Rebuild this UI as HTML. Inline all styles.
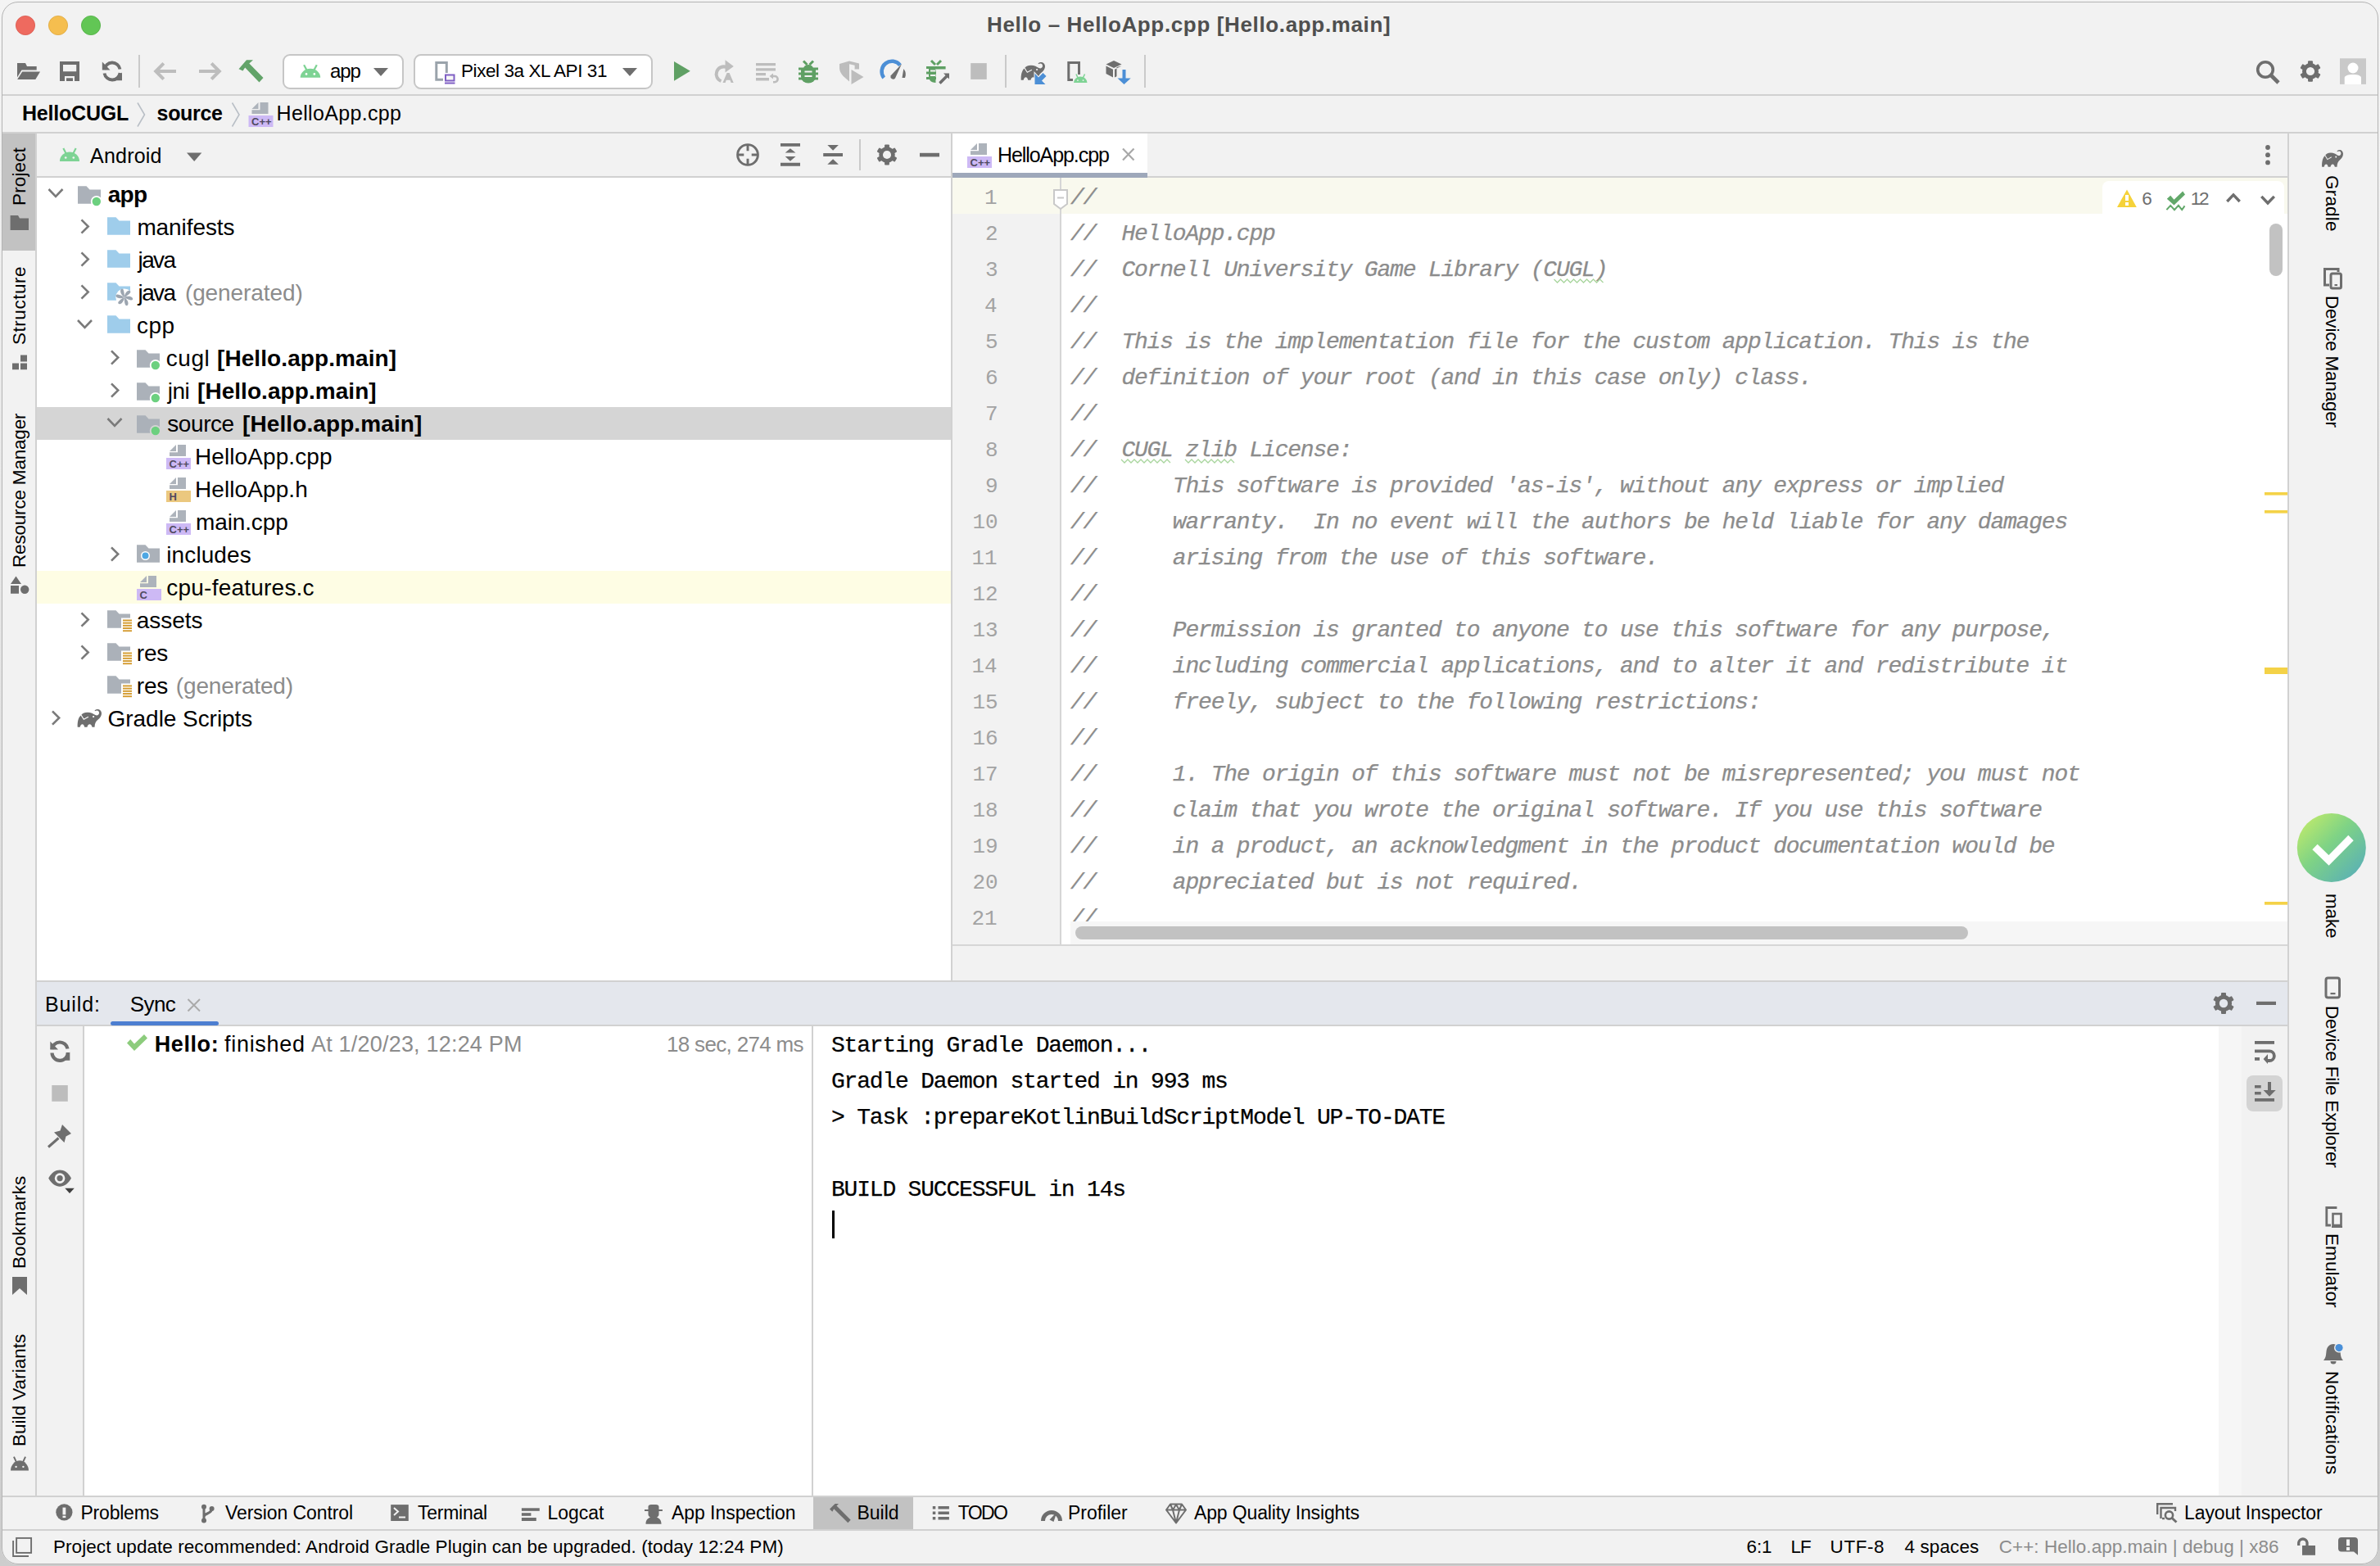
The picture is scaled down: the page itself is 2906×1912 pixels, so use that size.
<!DOCTYPE html>
<html><head><meta charset="utf-8"><title>Android Studio</title>
<style>
html,body{margin:0;padding:0;width:2906px;height:1912px;overflow:hidden;background:linear-gradient(#f4f4f4,#cdcdcd);}
#win{position:absolute;left:2px;top:2px;width:2902px;height:1908px;border-radius:20px;overflow:hidden;background:#f2f2f2;}
#in{position:absolute;left:-2px;top:-2px;width:2906px;height:1912px;}
#in div{position:absolute;}
#in div.t{height:0;line-height:0;white-space:pre;}
#code{overflow:hidden;}
#frame{position:absolute;left:2px;top:2px;width:2900px;height:1906px;border-radius:20px;border:1px solid #b4b4b4;pointer-events:none;}
</style></head><body>
<div id="win"><div id="in">
<div style="left:0px;top:115px;width:2906px;height:2px;background:#d1d1d1;"></div><div style="left:0px;top:161px;width:2906px;height:2px;background:#d1d1d1;"></div><div style="left:43px;top:163px;width:2px;height:1663px;background:#d1d1d1;"></div><div style="left:3px;top:163px;width:40px;height:143px;background:#c2c2c2;"></div><div style="left:45px;top:215px;width:1116px;height:2px;background:#d1d1d1;"></div><div style="left:45px;top:217px;width:1116px;height:980px;background:#ffffff;"></div><div style="left:45px;top:497px;width:1116px;height:40px;background:#d5d5d5;"></div><div style="left:45px;top:697px;width:1116px;height:40px;background:#fefde4;"></div><div style="left:1161px;top:163px;width:2px;height:1034px;background:#d1d1d1;"></div><div style="left:1163px;top:215px;width:1630px;height:2px;background:#d1d1d1;"></div><div style="left:1163px;top:163px;width:238px;height:48px;background:#ffffff;"></div><div style="left:1163px;top:211px;width:238px;height:6px;background:#9ea8ba;"></div><div style="left:1163px;top:217px;width:131px;height:936px;background:#f2f2f2;"></div><div style="left:1296px;top:217px;width:1497px;height:936px;background:#ffffff;"></div><div style="left:1163px;top:217px;width:1630px;height:44px;background:#f9f9ee;"></div><div style="left:1294px;top:217px;width:2px;height:936px;background:#d6d6d6;"></div><div style="left:1163px;top:1153px;width:1630px;height:2px;background:#d6d6d6;"></div><div style="left:2793px;top:163px;width:2px;height:1663px;background:#d1d1d1;"></div><div style="left:45px;top:1197px;width:2748px;height:2px;background:#d1d1d1;"></div><div style="left:45px;top:1199px;width:2748px;height:52px;background:#e4e7ed;"></div><div style="left:45px;top:1251px;width:2748px;height:2px;background:#d1d1d1;"></div><div style="left:101px;top:1253px;width:2px;height:573px;background:#d1d1d1;"></div><div style="left:103px;top:1253px;width:888px;height:573px;background:#ffffff;"></div><div style="left:991px;top:1253px;width:2px;height:573px;background:#d1d1d1;"></div><div style="left:993px;top:1253px;width:1716px;height:573px;background:#ffffff;"></div><div style="left:2709px;top:1253px;width:28px;height:573px;background:#f6f6f6;"></div><div style="left:2743px;top:1313px;width:44px;height:44px;background:#d4d4d4;border-radius:8px;"></div><div style="left:0px;top:1826px;width:2906px;height:2px;background:#d1d1d1;"></div><div style="left:993px;top:1828px;width:122px;height:39px;background:#c2c2c2;"></div><div style="left:0px;top:1867px;width:2906px;height:2px;background:#d1d1d1;"></div><div style="left:345px;top:66px;width:148px;height:43px;background:#ffffff;border:2px solid #c6c6c6;border-radius:9px;box-sizing:border-box;"></div><div style="left:505px;top:66px;width:292px;height:43px;background:#ffffff;border:2px solid #c6c6c6;border-radius:9px;box-sizing:border-box;"></div><div style="left:2567px;top:221px;width:222px;height:40px;background:#ffffff;border-radius:8px 8px 0 0;"></div><div style="left:1016px;top:1478px;width:3px;height:34px;background:#000;"></div>
<div class=t style="left:1205.00px;top:29.99px;font-family:'Liberation Sans';font-size:26px;font-weight:700;color:#4f4f4f;letter-spacing:0.644px;">Hello – HelloApp.cpp [Hello.app.main]</div><div class=t style="left:403.00px;top:86.68px;font-family:'Liberation Sans';font-size:24px;font-weight:400;color:#000;letter-spacing:-1.098px;">app</div><div class=t style="left:563.00px;top:87.20px;font-family:'Liberation Sans';font-size:22.5px;font-weight:400;color:#000;letter-spacing:-0.418px;">Pixel 3a XL API 31</div><div class=t style="left:27.00px;top:138.34px;font-family:'Liberation Sans';font-size:25px;font-weight:700;color:#000;letter-spacing:-0.209px;">HelloCUGL</div><div class=t style="left:191.60px;top:138.34px;font-family:'Liberation Sans';font-size:25px;font-weight:700;color:#000;letter-spacing:-0.336px;">source</div><div class=t style="left:337.50px;top:138.34px;font-family:'Liberation Sans';font-size:25px;font-weight:400;color:#000;letter-spacing:0.336px;">HelloApp.cpp</div><div class=t style="left:110.00px;top:190.34px;font-family:'Liberation Sans';font-size:25px;font-weight:400;color:#000;letter-spacing:0.222px;">Android</div><div class=t style="left:131.70px;top:238.30px;font-family:'Liberation Sans';font-size:28px;font-weight:700;color:#000;letter-spacing:-0.688px;">app</div><div class=t style="left:167.40px;top:278.30px;font-family:'Liberation Sans';font-size:28px;font-weight:400;color:#000;letter-spacing:-0.090px;">manifests</div><div class=t style="left:168.60px;top:318.30px;font-family:'Liberation Sans';font-size:28px;font-weight:400;color:#000;letter-spacing:-1.631px;">java</div><div class=t style="left:168.60px;top:358.30px;font-family:'Liberation Sans';font-size:28px;font-weight:400;color:#000;letter-spacing:-1.631px;">java</div><div class=t style="left:225.90px;top:358.30px;font-family:'Liberation Sans';font-size:28px;font-weight:400;color:#8c8c8c;letter-spacing:-0.083px;">(generated)</div><div class=t style="left:167.00px;top:398.30px;font-family:'Liberation Sans';font-size:28px;font-weight:400;color:#000;letter-spacing:0.464px;">cpp</div><div class=t style="left:202.70px;top:438.30px;font-family:'Liberation Sans';font-size:28px;font-weight:400;color:#000;letter-spacing:0.585px;">cugl</div><div class=t style="left:265.00px;top:438.30px;font-family:'Liberation Sans';font-size:28px;font-weight:700;color:#000;letter-spacing:0.082px;">[Hello.app.main]</div><div class=t style="left:204.70px;top:478.30px;font-family:'Liberation Sans';font-size:28px;font-weight:400;color:#000;letter-spacing:-0.446px;">jni</div><div class=t style="left:241.00px;top:478.30px;font-family:'Liberation Sans';font-size:28px;font-weight:700;color:#000;letter-spacing:0.055px;">[Hello.app.main]</div><div class=t style="left:204.30px;top:518.30px;font-family:'Liberation Sans';font-size:28px;font-weight:400;color:#000;letter-spacing:-0.434px;">source</div><div class=t style="left:296.00px;top:518.30px;font-family:'Liberation Sans';font-size:28px;font-weight:700;color:#000;letter-spacing:0.102px;">[Hello.app.main]</div><div class=t style="left:238.00px;top:558.30px;font-family:'Liberation Sans';font-size:28px;font-weight:400;color:#000;letter-spacing:0.084px;">HelloApp.cpp</div><div class=t style="left:238.00px;top:598.30px;font-family:'Liberation Sans';font-size:28px;font-weight:400;color:#000;letter-spacing:0.088px;">HelloApp.h</div><div class=t style="left:239.00px;top:638.30px;font-family:'Liberation Sans';font-size:28px;font-weight:400;color:#000;letter-spacing:-0.120px;">main.cpp</div><div class=t style="left:203.30px;top:678.30px;font-family:'Liberation Sans';font-size:28px;font-weight:400;color:#000;letter-spacing:0.096px;">includes</div><div class=t style="left:203.30px;top:718.30px;font-family:'Liberation Sans';font-size:28px;font-weight:400;color:#000;letter-spacing:0.222px;">cpu-features.c</div><div class=t style="left:166.80px;top:758.30px;font-family:'Liberation Sans';font-size:28px;font-weight:400;color:#000;letter-spacing:-0.045px;">assets</div><div class=t style="left:166.80px;top:798.30px;font-family:'Liberation Sans';font-size:28px;font-weight:400;color:#000;letter-spacing:-0.198px;">res</div><div class=t style="left:166.80px;top:838.30px;font-family:'Liberation Sans';font-size:28px;font-weight:400;color:#000;letter-spacing:-0.198px;">res</div><div class=t style="left:214.80px;top:838.30px;font-family:'Liberation Sans';font-size:28px;font-weight:400;color:#8c8c8c;letter-spacing:-0.143px;">(generated)</div><div class=t style="left:131.60px;top:878.30px;font-family:'Liberation Sans';font-size:28px;font-weight:400;color:#000;letter-spacing:-0.053px;">Gradle Scripts</div><div class=t style="left:1218.00px;top:189.34px;font-family:'Liberation Sans';font-size:25px;font-weight:400;color:#000;letter-spacing:-1.073px;">HelloApp.cpp</div><div class=t style="left:1307.00px;top:242.34px;font-family:'Liberation Mono';font-size:28px;font-weight:400;color:#8c8c8c;font-style:italic;letter-spacing:-1.200px;-webkit-text-stroke:0.25px #8c8c8c;">//</div><div class=t style="left:1202.00px;top:241.87px;font-family:'Liberation Mono';font-size:26px;font-weight:400;color:#a3a3a3;">1</div><div class=t style="left:1307.00px;top:286.34px;font-family:'Liberation Mono';font-size:28px;font-weight:400;color:#8c8c8c;font-style:italic;letter-spacing:-1.200px;-webkit-text-stroke:0.25px #8c8c8c;">//  HelloApp.cpp</div><div class=t style="left:1203.00px;top:285.87px;font-family:'Liberation Mono';font-size:26px;font-weight:400;color:#a3a3a3;">2</div><div class=t style="left:1307.00px;top:330.34px;font-family:'Liberation Mono';font-size:28px;font-weight:400;color:#8c8c8c;font-style:italic;letter-spacing:-1.200px;-webkit-text-stroke:0.25px #8c8c8c;">//  Cornell University Game Library (CUGL)</div><div class=t style="left:1203.00px;top:329.87px;font-family:'Liberation Mono';font-size:26px;font-weight:400;color:#a3a3a3;">3</div><div class=t style="left:1307.00px;top:374.34px;font-family:'Liberation Mono';font-size:28px;font-weight:400;color:#8c8c8c;font-style:italic;letter-spacing:-1.200px;-webkit-text-stroke:0.25px #8c8c8c;">//</div><div class=t style="left:1202.00px;top:373.87px;font-family:'Liberation Mono';font-size:26px;font-weight:400;color:#a3a3a3;">4</div><div class=t style="left:1307.00px;top:418.34px;font-family:'Liberation Mono';font-size:28px;font-weight:400;color:#8c8c8c;font-style:italic;letter-spacing:-1.200px;-webkit-text-stroke:0.25px #8c8c8c;">//  This is the implementation file for the custom application. This is the</div><div class=t style="left:1203.00px;top:417.87px;font-family:'Liberation Mono';font-size:26px;font-weight:400;color:#a3a3a3;">5</div><div class=t style="left:1307.00px;top:462.34px;font-family:'Liberation Mono';font-size:28px;font-weight:400;color:#8c8c8c;font-style:italic;letter-spacing:-1.200px;-webkit-text-stroke:0.25px #8c8c8c;">//  definition of your root (and in this case only) class.</div><div class=t style="left:1203.00px;top:461.87px;font-family:'Liberation Mono';font-size:26px;font-weight:400;color:#a3a3a3;">6</div><div class=t style="left:1307.00px;top:506.34px;font-family:'Liberation Mono';font-size:28px;font-weight:400;color:#8c8c8c;font-style:italic;letter-spacing:-1.200px;-webkit-text-stroke:0.25px #8c8c8c;">//</div><div class=t style="left:1203.00px;top:505.87px;font-family:'Liberation Mono';font-size:26px;font-weight:400;color:#a3a3a3;">7</div><div class=t style="left:1307.00px;top:550.34px;font-family:'Liberation Mono';font-size:28px;font-weight:400;color:#8c8c8c;font-style:italic;letter-spacing:-1.200px;-webkit-text-stroke:0.25px #8c8c8c;">//  CUGL zlib License:</div><div class=t style="left:1203.00px;top:549.87px;font-family:'Liberation Mono';font-size:26px;font-weight:400;color:#a3a3a3;">8</div><div class=t style="left:1307.00px;top:594.34px;font-family:'Liberation Mono';font-size:28px;font-weight:400;color:#8c8c8c;font-style:italic;letter-spacing:-1.200px;-webkit-text-stroke:0.25px #8c8c8c;">//      This software is provided &#x27;as-is&#x27;, without any express or implied</div><div class=t style="left:1203.00px;top:593.87px;font-family:'Liberation Mono';font-size:26px;font-weight:400;color:#a3a3a3;">9</div><div class=t style="left:1307.00px;top:638.34px;font-family:'Liberation Mono';font-size:28px;font-weight:400;color:#8c8c8c;font-style:italic;letter-spacing:-1.200px;-webkit-text-stroke:0.25px #8c8c8c;">//      warranty.  In no event will the authors be held liable for any damages</div><div class=t style="left:1187.40px;top:637.87px;font-family:'Liberation Mono';font-size:26px;font-weight:400;color:#a3a3a3;">10</div><div class=t style="left:1307.00px;top:682.34px;font-family:'Liberation Mono';font-size:28px;font-weight:400;color:#8c8c8c;font-style:italic;letter-spacing:-1.200px;-webkit-text-stroke:0.25px #8c8c8c;">//      arising from the use of this software.</div><div class=t style="left:1186.40px;top:681.87px;font-family:'Liberation Mono';font-size:26px;font-weight:400;color:#a3a3a3;">11</div><div class=t style="left:1307.00px;top:726.34px;font-family:'Liberation Mono';font-size:28px;font-weight:400;color:#8c8c8c;font-style:italic;letter-spacing:-1.200px;-webkit-text-stroke:0.25px #8c8c8c;">//</div><div class=t style="left:1187.40px;top:725.87px;font-family:'Liberation Mono';font-size:26px;font-weight:400;color:#a3a3a3;">12</div><div class=t style="left:1307.00px;top:770.34px;font-family:'Liberation Mono';font-size:28px;font-weight:400;color:#8c8c8c;font-style:italic;letter-spacing:-1.200px;-webkit-text-stroke:0.25px #8c8c8c;">//      Permission is granted to anyone to use this software for any purpose,</div><div class=t style="left:1187.40px;top:769.87px;font-family:'Liberation Mono';font-size:26px;font-weight:400;color:#a3a3a3;">13</div><div class=t style="left:1307.00px;top:814.34px;font-family:'Liberation Mono';font-size:28px;font-weight:400;color:#8c8c8c;font-style:italic;letter-spacing:-1.200px;-webkit-text-stroke:0.25px #8c8c8c;">//      including commercial applications, and to alter it and redistribute it</div><div class=t style="left:1186.40px;top:813.87px;font-family:'Liberation Mono';font-size:26px;font-weight:400;color:#a3a3a3;">14</div><div class=t style="left:1307.00px;top:858.34px;font-family:'Liberation Mono';font-size:28px;font-weight:400;color:#8c8c8c;font-style:italic;letter-spacing:-1.200px;-webkit-text-stroke:0.25px #8c8c8c;">//      freely, subject to the following restrictions:</div><div class=t style="left:1187.40px;top:857.87px;font-family:'Liberation Mono';font-size:26px;font-weight:400;color:#a3a3a3;">15</div><div class=t style="left:1307.00px;top:902.34px;font-family:'Liberation Mono';font-size:28px;font-weight:400;color:#8c8c8c;font-style:italic;letter-spacing:-1.200px;-webkit-text-stroke:0.25px #8c8c8c;">//</div><div class=t style="left:1187.40px;top:901.87px;font-family:'Liberation Mono';font-size:26px;font-weight:400;color:#a3a3a3;">16</div><div class=t style="left:1307.00px;top:946.34px;font-family:'Liberation Mono';font-size:28px;font-weight:400;color:#8c8c8c;font-style:italic;letter-spacing:-1.200px;-webkit-text-stroke:0.25px #8c8c8c;">//      1. The origin of this software must not be misrepresented; you must not</div><div class=t style="left:1187.40px;top:945.87px;font-family:'Liberation Mono';font-size:26px;font-weight:400;color:#a3a3a3;">17</div><div class=t style="left:1307.00px;top:990.34px;font-family:'Liberation Mono';font-size:28px;font-weight:400;color:#8c8c8c;font-style:italic;letter-spacing:-1.200px;-webkit-text-stroke:0.25px #8c8c8c;">//      claim that you wrote the original software. If you use this software</div><div class=t style="left:1187.40px;top:989.87px;font-family:'Liberation Mono';font-size:26px;font-weight:400;color:#a3a3a3;">18</div><div class=t style="left:1307.00px;top:1034.34px;font-family:'Liberation Mono';font-size:28px;font-weight:400;color:#8c8c8c;font-style:italic;letter-spacing:-1.200px;-webkit-text-stroke:0.25px #8c8c8c;">//      in a product, an acknowledgment in the product documentation would be</div><div class=t style="left:1187.40px;top:1033.87px;font-family:'Liberation Mono';font-size:26px;font-weight:400;color:#a3a3a3;">19</div><div class=t style="left:1307.00px;top:1078.34px;font-family:'Liberation Mono';font-size:28px;font-weight:400;color:#8c8c8c;font-style:italic;letter-spacing:-1.200px;-webkit-text-stroke:0.25px #8c8c8c;">//      appreciated but is not required.</div><div class=t style="left:1187.40px;top:1077.87px;font-family:'Liberation Mono';font-size:26px;font-weight:400;color:#a3a3a3;">20</div><div class=t style="left:1307.00px;top:1122.34px;font-family:'Liberation Mono';font-size:28px;font-weight:400;color:#8c8c8c;font-style:italic;letter-spacing:-1.200px;-webkit-text-stroke:0.25px #8c8c8c;">//</div><div class=t style="left:1186.40px;top:1121.87px;font-family:'Liberation Mono';font-size:26px;font-weight:400;color:#a3a3a3;">21</div><div class=t style="left:2615.20px;top:243.20px;font-family:'Liberation Sans';font-size:22.5px;font-weight:400;color:#6e6e6e;">6</div><div class=t style="left:2674.80px;top:243.20px;font-family:'Liberation Sans';font-size:22.5px;font-weight:400;color:#6e6e6e;letter-spacing:-2.313px;">12</div><div class=t style="left:55.00px;top:1226.34px;font-family:'Liberation Sans';font-size:25px;font-weight:400;color:#000;letter-spacing:0.882px;">Build:</div><div class=t style="left:158.70px;top:1225.99px;font-family:'Liberation Sans';font-size:26px;font-weight:400;color:#000;letter-spacing:-0.567px;">Sync</div><div class=t style="left:188.70px;top:1274.64px;font-family:'Liberation Sans';font-size:27px;font-weight:700;color:#000;letter-spacing:0.598px;">Hello:</div><div class=t style="left:274.00px;top:1274.64px;font-family:'Liberation Sans';font-size:27px;font-weight:400;color:#000;letter-spacing:0.708px;">finished</div><div class=t style="left:380.00px;top:1274.64px;font-family:'Liberation Sans';font-size:27px;font-weight:400;color:#8c8c8c;letter-spacing:0.201px;">At 1/20/23, 12:24 PM</div><div class=t style="left:814.00px;top:1274.99px;font-family:'Liberation Sans';font-size:26px;font-weight:400;color:#8c8c8c;letter-spacing:-0.678px;">18 sec, 274 ms</div><div class=t style="left:1015.00px;top:1276.54px;font-family:'Liberation Mono';font-size:28px;font-weight:400;color:#000;letter-spacing:-1.200px;-webkit-text-stroke:0.25px #000;">Starting Gradle Daemon...</div><div class=t style="left:1015.00px;top:1320.54px;font-family:'Liberation Mono';font-size:28px;font-weight:400;color:#000;letter-spacing:-1.200px;-webkit-text-stroke:0.25px #000;">Gradle Daemon started in 993 ms</div><div class=t style="left:1015.00px;top:1364.54px;font-family:'Liberation Mono';font-size:28px;font-weight:400;color:#000;letter-spacing:-1.200px;-webkit-text-stroke:0.25px #000;">&gt; Task :prepareKotlinBuildScriptModel UP-TO-DATE</div><div class=t style="left:1015.00px;top:1452.54px;font-family:'Liberation Mono';font-size:28px;font-weight:400;color:#000;letter-spacing:-1.200px;-webkit-text-stroke:0.25px #000;">BUILD SUCCESSFUL in 14s</div><div class=t style="left:98.50px;top:1847.03px;font-family:'Liberation Sans';font-size:23px;font-weight:400;color:#000;letter-spacing:-0.221px;">Problems</div><div class=t style="left:275.00px;top:1847.03px;font-family:'Liberation Sans';font-size:23px;font-weight:400;color:#000;letter-spacing:-0.081px;">Version Control</div><div class=t style="left:510.00px;top:1847.03px;font-family:'Liberation Sans';font-size:23px;font-weight:400;color:#000;letter-spacing:-0.258px;">Terminal</div><div class=t style="left:668.50px;top:1847.03px;font-family:'Liberation Sans';font-size:23px;font-weight:400;color:#000;letter-spacing:-0.033px;">Logcat</div><div class=t style="left:820.00px;top:1847.03px;font-family:'Liberation Sans';font-size:23px;font-weight:400;color:#000;letter-spacing:-0.052px;">App Inspection</div><div class=t style="left:1046.50px;top:1847.03px;font-family:'Liberation Sans';font-size:23px;font-weight:400;color:#000;letter-spacing:-0.038px;">Build</div><div class=t style="left:1169.70px;top:1847.03px;font-family:'Liberation Sans';font-size:23px;font-weight:400;color:#000;letter-spacing:-1.611px;">TODO</div><div class=t style="left:1304.00px;top:1847.03px;font-family:'Liberation Sans';font-size:23px;font-weight:400;color:#000;letter-spacing:-0.028px;">Profiler</div><div class=t style="left:1458.00px;top:1847.03px;font-family:'Liberation Sans';font-size:23px;font-weight:400;color:#000;letter-spacing:-0.134px;">App Quality Insights</div><div class=t style="left:2667.00px;top:1847.03px;font-family:'Liberation Sans';font-size:23px;font-weight:400;color:#000;letter-spacing:-0.093px;">Layout Inspector</div><div class=t style="left:65.00px;top:1889.20px;font-family:'Liberation Sans';font-size:22.5px;font-weight:400;color:#000;letter-spacing:0.060px;">Project update recommended: Android Gradle Plugin can be upgraded. (today 12:24 PM)</div><div class=t style="left:2132.50px;top:1889.20px;font-family:'Liberation Sans';font-size:22.5px;font-weight:400;color:#000;letter-spacing:-0.132px;">6:1</div><div class=t style="left:2186.50px;top:1889.20px;font-family:'Liberation Sans';font-size:22.5px;font-weight:400;color:#000;letter-spacing:-1.013px;">LF</div><div class=t style="left:2234.60px;top:1889.20px;font-family:'Liberation Sans';font-size:22.5px;font-weight:400;color:#000;letter-spacing:0.543px;">UTF-8</div><div class=t style="left:2325.60px;top:1889.20px;font-family:'Liberation Sans';font-size:22.5px;font-weight:400;color:#000;letter-spacing:0.085px;">4 spaces</div><div class=t style="left:2440.70px;top:1889.20px;font-family:'Liberation Sans';font-size:22.5px;font-weight:400;color:#8c8c8c;letter-spacing:0.036px;">C++: Hello.app.main | debug | x86</div><div class=t style="left:23.70px;top:250.50px;transform-origin:0 0;transform:rotate(-90deg);font-family:'Liberation Sans';font-size:22.5px;font-weight:400;color:#000;letter-spacing:0.121px;">Project</div><div class=t style="left:23.70px;top:421.00px;transform-origin:0 0;transform:rotate(-90deg);font-family:'Liberation Sans';font-size:22.5px;font-weight:400;color:#000;letter-spacing:0.529px;">Structure</div><div class=t style="left:23.70px;top:693.00px;transform-origin:0 0;transform:rotate(-90deg);font-family:'Liberation Sans';font-size:22.5px;font-weight:400;color:#000;letter-spacing:-0.190px;">Resource Manager</div><div class=t style="left:23.70px;top:1549.00px;transform-origin:0 0;transform:rotate(-90deg);font-family:'Liberation Sans';font-size:22.5px;font-weight:400;color:#000;letter-spacing:0.090px;">Bookmarks</div><div class=t style="left:23.70px;top:1766.00px;transform-origin:0 0;transform:rotate(-90deg);font-family:'Liberation Sans';font-size:22.5px;font-weight:400;color:#000;">Build Variants</div><div class=t style="left:2847.30px;top:214.00px;transform-origin:0 0;transform:rotate(90deg);font-family:'Liberation Sans';font-size:22.5px;font-weight:400;color:#000;letter-spacing:0.196px;">Gradle</div><div class=t style="left:2847.30px;top:361.00px;transform-origin:0 0;transform:rotate(90deg);font-family:'Liberation Sans';font-size:22.5px;font-weight:400;color:#000;letter-spacing:-0.210px;">Device Manager</div><div class=t style="left:2847.30px;top:1091.00px;transform-origin:0 0;transform:rotate(90deg);font-family:'Liberation Sans';font-size:22.5px;font-weight:400;color:#000;letter-spacing:-0.169px;">make</div><div class=t style="left:2847.30px;top:1227.70px;transform-origin:0 0;transform:rotate(90deg);font-family:'Liberation Sans';font-size:22.5px;font-weight:400;color:#000;letter-spacing:-0.185px;">Device File Explorer</div><div class=t style="left:2847.30px;top:1505.50px;transform-origin:0 0;transform:rotate(90deg);font-family:'Liberation Sans';font-size:22.5px;font-weight:400;color:#000;letter-spacing:0.066px;">Emulator</div><div class=t style="left:2847.30px;top:1674.00px;transform-origin:0 0;transform:rotate(90deg);font-family:'Liberation Sans';font-size:22.5px;font-weight:400;color:#000;letter-spacing:0.308px;">Notifications</div>
<svg width="2906" height="1912" viewBox="0 0 2906 1912" style="position:absolute;left:0;top:0">
<path fill="#6e6e6e" d="M21,77 H31 L33,81 H44.7 V85.5 H26.5 L21,94.5 Z"/><path fill="#6e6e6e" d="M27.2,87.5 H49 L43.3,97 H21.2 Z"/><path fill="#6e6e6e" fill-rule="evenodd" d="M73,75 H97 V99 H73 Z M77,79 V87.2 H93.2 V79 Z M79,93 V99 H91 V93 Z"/><rect x="81" y="95.3" width="8" height="3.7" fill="#6e6e6e"/><path fill="none" stroke="#6e6e6e" stroke-width="3.8" d="M127.5,85 A9.6,9.6 0 0 1 146.5,84.5"/><path fill="#6e6e6e" d="M124.8,75.5 V85.6 H134.5 Z"/><path fill="none" stroke="#6e6e6e" stroke-width="3.8" d="M146.5,89 A9.6,9.6 0 0 1 127.5,89.5"/><path fill="#6e6e6e" d="M149,88.4 V98.3 H139.3 Z"/><rect x="169" y="67" width="2" height="40" fill="#cacaca"/><path fill="none" stroke="#bdbdbd" stroke-width="4" d="M190,87 H215 M199.8,77.3 L190.2,87 L199.8,96.7"/><path fill="none" stroke="#bdbdbd" stroke-width="4" d="M243,87 H268 M258.2,77.3 L267.8,87 L258.2,96.7"/><path fill="#62a369" d="M291.5,84.3 L301,73.2 H309 L304.3,77.6 L321.5,95 L316.5,100.5 L299.2,82.6 L296.5,86.6 Z"/><path fill="#7ed394" d="M366.7,94.8 A12.25,11.159999999999997 0 0 1 391.2,94.8 Z"/><path stroke="#7ed394" stroke-width="2.21" d="M371.11,79.3 L374.53999999999996,85.64 M386.78999999999996,79.3 L383.36,85.64"/><circle cx="374.05" cy="90.46" r="1.35" fill="#ffffff"/><circle cx="383.84999999999997" cy="90.46" r="1.35" fill="#ffffff"/><path fill="#6e6e6e" d="M456,83 H474 L465,93 Z"/><path fill="none" stroke="#9aa3ab" stroke-width="3" d="M545.3,89 V76.5 H532.8 V97.2 H541"/><rect x="544" y="91.5" width="10.5" height="7" fill="#f6f6f6" stroke="#7f5fc4" stroke-width="2"/><rect x="543" y="100.5" width="12.5" height="2" fill="#7f5fc4"/><path fill="#6e6e6e" d="M760,83 H778 L769,93 Z"/><path fill="#5fa064" d="M823,75 L842.8,86.8 L823,98.8 Z"/><path fill="none" stroke="#bdbdbd" stroke-width="4" d="M887,82 A8.5,8.5 0 0 0 880.5,99"/><path fill="#bdbdbd" d="M885.5,73.3 L895.8,81 L885.5,88.5 Z"/><path fill="#bdbdbd" d="M882.5,101 L887.6,89 H890.6 L895.7,101 H892.6 L891.4,97.8 H886.8 L885.6,101 Z"/><path fill="#bdbdbd" d="M923,77 H947 V80.2 H923 Z M923,83.2 H947 V86.4 H923 Z M923,89.1 H935 V92.3 H923 Z M923,95 H939 V98.5 H923 Z"/><path fill="none" stroke="#bdbdbd" stroke-width="2.6" d="M943,93 H946 A3.6,3.6 0 0 1 946,100.2 H944"/><path fill="#bdbdbd" d="M939.5,93 L944,89.5 V96.5 Z"/><path fill="#5fa064" d="M978,84.0 H996 V93.5 A9,8 0 0 1 978,93.5 Z"/><path fill="#5fa064" d="M981,84.0 A6,5 0 0 1 993,84.0 Z"/><path stroke="#5fa064" stroke-width="3" d="M981,74.5 L985.5,79.0 M993,74.5 L988.5,79.0"/><path stroke="#5fa064" stroke-width="3" d="M975,84.0 H999 M975,90.0 H999 M975,96.0 H999"/><path fill="#f2f2f2" d="M982.5,86.5 H991.5 V88.5 H982.5 Z M982.5,92.0 H991.5 V94.0 H982.5 Z"/><path fill="#bdbdbd" d="M1025,78 L1037,74.6 L1049,77.5 V84.5 H1043.6 V79.8 L1037,78.3 V99.5 L1033,96 C1027.5,91.5 1025,87 1025,83 Z"/><path fill="#bdbdbd" d="M1039.5,85 L1054.5,94 L1039.5,103 Z"/><path fill="none" stroke="#4c8fd6" stroke-width="4.5" d="M1079.2,95 A11,11 0 0 1 1099,79.6"/><path fill="#6e6e6e" d="M1087.5,92.5 L1101,78 L1093,95.5 A3.2,3.2 0 0 1 1087.5,92.5 Z"/><path fill="#6e6e6e" d="M1101.5,95 H1105 A11,11 0 0 0 1103.3,84 Z"/><path fill="#5fa064" d="M1143,81 H1154.6 V84.6 H1143 Z"/><path fill="#5fa064" d="M1131,81 H1142.5 V101 C1136,101 1134,97 1134,92 V81 Z"/><path stroke="#5fa064" stroke-width="3" d="M1137,74 L1142,79 M1149,74 L1144,79 M1131,82.5 H1143 M1131,89 H1143 M1131,95.5 H1143"/><path fill="#f2f2f2" d="M1136,85.5 H1142 V87.5 H1136 Z M1136,91 H1142 V93 H1136 Z"/><path fill="#6e6e6e" d="M1147,101.5 L1155.5,93 L1152,89.5 H1159 V96.5 L1156.3,94 L1148.5,102.5 Z"/><path stroke="#6e6e6e" stroke-width="3.5" d="M1147.5,101.5 L1156,93"/><rect x="1185.2" y="77.1" width="19.6" height="19.8" fill="#bdbdbd"/><rect x="1227" y="67" width="2" height="40" fill="#cacaca"/><g transform="translate(1246,76) scale(1.000,1.000)"><path fill="#6e6e6e" d="M0.7,21.7 C0.3,15 2,9.5 4.8,7.5 C6,5.2 9,3.7 12.9,3.7 C17,3.7 20,5.5 22.5,7 C24,7.8 26.5,7.5 27,5 C27.3,3 26,1.6 24.5,1.6 C23.5,1.6 22.6,2 22,2.3 L21.6,1.2 C22.8,0.3 24,0 25.2,0 C28,0 30,2.2 30,5.1 C30,8 28.5,10.5 25.5,12.7 C23,14.5 21.8,17 21.5,21.7 L18.5,21.7 C18,19.5 17,18.2 15.5,18.2 C14,18.2 12.9,19.5 12.5,21.7 L9.2,21.7 C8.8,19.5 7.8,18.3 6.5,18.3 C5.2,18.3 4.2,19.5 3.7,21.7 Z"/><path fill="none" stroke="#f2f2f2" stroke-width="1.1" d="M4.9,6.9 L8.3,12.2 L13.9,9.2"/><circle cx="20.1" cy="9" r="1.1" fill="#f2f2f2"/></g><path fill="#4c8fd6" stroke="#f2f2f2" stroke-width="2" paint-order="stroke" d="M1263.5,89.5 V103 H1276.5 L1272,98.5 L1277.5,93 L1273.5,89 L1268,94.5 Z"/><path fill="none" stroke="#6e6e6e" stroke-width="3" d="M1317.5,91 V76.5 H1304.8 V97.5 H1310"/><path fill="#7ed394" d="M1311,101.0 A8.25,7.560000000000002 0 0 1 1327.5,101.0 Z"/><path stroke="#7ed394" stroke-width="1.50" d="M1313.97,90.5 L1316.28,95.44 M1324.53,90.5 L1322.22,95.44"/><circle cx="1315.95" cy="98.06" r="0.91" fill="#f2f2f2"/><circle cx="1322.55" cy="98.06" r="0.91" fill="#f2f2f2"/><path fill="#6e6e6e" d="M1360,74 L1369.5,78.5 L1360,83 L1350.5,78.5 Z"/><path fill="#6e6e6e" d="M1350.5,80.5 L1359,84.8 V94.5 L1350.5,90 Z M1369.5,80.5 L1361,84.8 V94.5 L1363.5,93.2 V82 L1369.5,80.5 Z"/><path fill="#4c8fd6" d="M1370.5,85 H1374.5 V95.5 H1380.7 L1372.5,103 L1364.5,95.5 H1370.5 Z"/><rect x="1397" y="67" width="2" height="40" fill="#cacaca"/><circle cx="2766" cy="85" r="9.3" fill="none" stroke="#6e6e6e" stroke-width="3.6"/><path stroke="#6e6e6e" stroke-width="4.6" d="M2772.5,91.5 L2782,101"/><circle cx="2821" cy="87" r="9.98" fill="#6e6e6e"/><rect x="2818.06" y="74.20" width="5.89" height="12.80" rx="1" fill="#6e6e6e" transform="rotate(0.0 2821 87)"/><rect x="2818.06" y="74.20" width="5.89" height="12.80" rx="1" fill="#6e6e6e" transform="rotate(60.0 2821 87)"/><rect x="2818.06" y="74.20" width="5.89" height="12.80" rx="1" fill="#6e6e6e" transform="rotate(120.0 2821 87)"/><rect x="2818.06" y="74.20" width="5.89" height="12.80" rx="1" fill="#6e6e6e" transform="rotate(180.0 2821 87)"/><rect x="2818.06" y="74.20" width="5.89" height="12.80" rx="1" fill="#6e6e6e" transform="rotate(240.0 2821 87)"/><rect x="2818.06" y="74.20" width="5.89" height="12.80" rx="1" fill="#6e6e6e" transform="rotate(300.0 2821 87)"/><circle cx="2821" cy="87" r="5.12" fill="#f2f2f2"/><rect x="2857" y="71.3" width="32" height="31.6" fill="#c9c9c9"/><circle cx="2873" cy="83" r="6.5" fill="#ffffff"/><path fill="#ffffff" d="M2862.7,102.9 V95 C2862.7,92.5 2867,91 2873,91 C2879,91 2883,92.5 2883,95 V102.9 Z"/><path fill="none" stroke="#b9bfc6" stroke-width="1.6" d="M168,125.5 L176.5,140 L168,154.5 M283.5,125.5 L292,140 L283.5,154.5"/><path fill="#adb3bb" d="M307.5,133 L315.5,125 V133 Z M317.5,125 H327.5 V139 H307.5 V134.2 H317.5 Z"/><rect x="303.5" y="141" width="30" height="14" fill="#cdb9f5"/><text x="307.0" y="153" font-family="Liberation Sans" font-weight="700" font-size="13" fill="#4f4960">C++</text><path fill="#7ed394" d="M73,197 A12.0,11.52000000000001 0 0 1 97,197 Z"/><path stroke="#7ed394" stroke-width="2.16" d="M77.32,181 L80.68,187.48 M92.68,181 L89.32,187.48"/><circle cx="80.2" cy="192.52" r="1.32" fill="#f2f2f2"/><circle cx="89.8" cy="192.52" r="1.32" fill="#f2f2f2"/><path fill="#6e6e6e" d="M228,186.5 H246.3 L237.2,197 Z"/><circle cx="913" cy="189" r="12.4" fill="none" stroke="#6e6e6e" stroke-width="2.9"/><path stroke="#6e6e6e" stroke-width="2.9" d="M913,177 V184.3 M913,193.7 V201 M901,189 H908.3 M917.7,189 H925"/><path fill="#6e6e6e" d="M953,175 H977 V178.8 H953 Z M953,198.8 H977 V202.8 H953 Z M958.7,186.6 L964.9,181.2 L971.5,186.6 Z M958.7,191.1 L964.9,196.8 L971.5,191.1 Z"/><path fill="#6e6e6e" d="M1005.2,187.1 H1029 V190.9 H1005.2 Z M1010.3,176.9 L1017.1,183.7 L1023.9,176.9 Z M1010.3,200.8 L1017.1,194.3 L1023.9,200.8 Z"/><rect x="1049" y="170" width="2" height="38" fill="#cacaca"/><circle cx="1083" cy="189" r="9.83" fill="#6e6e6e"/><rect x="1080.10" y="176.40" width="5.80" height="12.60" rx="1" fill="#6e6e6e" transform="rotate(0.0 1083 189)"/><rect x="1080.10" y="176.40" width="5.80" height="12.60" rx="1" fill="#6e6e6e" transform="rotate(60.0 1083 189)"/><rect x="1080.10" y="176.40" width="5.80" height="12.60" rx="1" fill="#6e6e6e" transform="rotate(120.0 1083 189)"/><rect x="1080.10" y="176.40" width="5.80" height="12.60" rx="1" fill="#6e6e6e" transform="rotate(180.0 1083 189)"/><rect x="1080.10" y="176.40" width="5.80" height="12.60" rx="1" fill="#6e6e6e" transform="rotate(240.0 1083 189)"/><rect x="1080.10" y="176.40" width="5.80" height="12.60" rx="1" fill="#6e6e6e" transform="rotate(300.0 1083 189)"/><circle cx="1083" cy="189" r="5.04" fill="#f2f2f2"/><rect x="1123" y="186.8" width="24" height="4.6" fill="#6e6e6e"/><path fill="#adb3bb" d="M1185,183 L1193,175 V183 Z M1195,175 H1205 V189 H1185 V184.2 H1195 Z"/><rect x="1181" y="191" width="30" height="14" fill="#cdb9f5"/><text x="1184.5" y="203" font-family="Liberation Sans" font-weight="700" font-size="13" fill="#4f4960">C++</text><path stroke="#a8a8a8" stroke-width="2.2" d="M1371,181.5 L1384.5,195.5 M1384.5,181.5 L1371,195.5"/><circle cx="2769" cy="180" r="2.9" fill="#6e6e6e"/><circle cx="2769" cy="189.2" r="2.9" fill="#6e6e6e"/><circle cx="2769" cy="198.4" r="2.9" fill="#6e6e6e"/><circle cx="31" cy="31" r="11.6" fill="#ee6a5f" stroke="#d9574c" stroke-width="0.8"/><circle cx="71" cy="31" r="11.6" fill="#f5be4f" stroke="#dea73c" stroke-width="0.8"/><circle cx="111" cy="31" r="11.6" fill="#62c655" stroke="#4fae43" stroke-width="0.8"/><path fill="none" stroke="#7a7a7a" stroke-width="2.6" d="M59.5,231.0 L68,239.8 L76.5,231.0"/><path fill="#abb1b9" d="M95,227.2 H105.5 L109.5,231.5 H123 V248.7 H95 Z"/><circle cx="117.8" cy="246" r="7.0" fill="#ffffff"/><circle cx="117.8" cy="246" r="5.2" fill="#6cd07f"/><path fill="none" stroke="#7a7a7a" stroke-width="2.6" d="M99.5,268.3 L107.7,276.5 L99.5,284.7"/><path fill="#9fcdeb" d="M131,265.2 H141.5 L145.5,269.5 H159 V286.7 H131 Z"/><path fill="none" stroke="#7a7a7a" stroke-width="2.6" d="M99.5,308.3 L107.7,316.5 L99.5,324.7"/><path fill="#9fcdeb" d="M131,305.2 H141.5 L145.5,309.5 H159 V326.7 H131 Z"/><path fill="none" stroke="#7a7a7a" stroke-width="2.6" d="M99.5,348.3 L107.7,356.5 L99.5,364.7"/><path fill="#9fcdeb" d="M131,345.2 H141.5 L145.5,349.5 H159 V366.7 H131 Z"/><circle cx="151.8" cy="363" r="10.5" fill="#ffffff"/><path fill="#9ca5b0" transform="translate(151.8,363) rotate(0) scale(0.95)" d="M0,0 C0.3,-4 2.5,-8 5.5,-8.7 C7.8,-9.1 8.7,-7 7.4,-5.5 C5.5,-3.4 3,-1.4 0,0 Z"/><path fill="#9ca5b0" transform="translate(151.8,363) rotate(60) scale(0.95)" d="M0,0 C0.3,-4 2.5,-8 5.5,-8.7 C7.8,-9.1 8.7,-7 7.4,-5.5 C5.5,-3.4 3,-1.4 0,0 Z"/><path fill="#9ca5b0" transform="translate(151.8,363) rotate(120) scale(0.95)" d="M0,0 C0.3,-4 2.5,-8 5.5,-8.7 C7.8,-9.1 8.7,-7 7.4,-5.5 C5.5,-3.4 3,-1.4 0,0 Z"/><path fill="#9ca5b0" transform="translate(151.8,363) rotate(180) scale(0.95)" d="M0,0 C0.3,-4 2.5,-8 5.5,-8.7 C7.8,-9.1 8.7,-7 7.4,-5.5 C5.5,-3.4 3,-1.4 0,0 Z"/><path fill="#9ca5b0" transform="translate(151.8,363) rotate(240) scale(0.95)" d="M0,0 C0.3,-4 2.5,-8 5.5,-8.7 C7.8,-9.1 8.7,-7 7.4,-5.5 C5.5,-3.4 3,-1.4 0,0 Z"/><path fill="#9ca5b0" transform="translate(151.8,363) rotate(300) scale(0.95)" d="M0,0 C0.3,-4 2.5,-8 5.5,-8.7 C7.8,-9.1 8.7,-7 7.4,-5.5 C5.5,-3.4 3,-1.4 0,0 Z"/><path fill="none" stroke="#7a7a7a" stroke-width="2.6" d="M95.0,391.0 L103.5,399.8 L112.0,391.0"/><path fill="#9fcdeb" d="M131,385.2 H141.5 L145.5,389.5 H159 V406.7 H131 Z"/><path fill="none" stroke="#7a7a7a" stroke-width="2.6" d="M136,428.3 L144.2,436.5 L136,444.7"/><path fill="#abb1b9" d="M167,427.2 H177.5 L181.5,431.5 H195 V448.7 H167 Z"/><circle cx="189.8" cy="446" r="7.0" fill="#ffffff"/><circle cx="189.8" cy="446" r="5.2" fill="#6cd07f"/><path fill="none" stroke="#7a7a7a" stroke-width="2.6" d="M136,468.3 L144.2,476.5 L136,484.7"/><path fill="#abb1b9" d="M167,467.2 H177.5 L181.5,471.5 H195 V488.7 H167 Z"/><circle cx="189.8" cy="486" r="7.0" fill="#ffffff"/><circle cx="189.8" cy="486" r="5.2" fill="#6cd07f"/><path fill="none" stroke="#7a7a7a" stroke-width="2.6" d="M131.5,511.0 L140,519.8 L148.5,511.0"/><path fill="#abb1b9" d="M167,507.2 H177.5 L181.5,511.5 H195 V528.7 H167 Z"/><circle cx="189.8" cy="526" r="7.0" fill="#d5d5d5"/><circle cx="189.8" cy="526" r="5.2" fill="#6cd07f"/><path fill="#adb3bb" d="M207,551 L215,543 V551 Z M217,543 H227 V557 H207 V552.2 H217 Z"/><rect x="203" y="559" width="30" height="14" fill="#cdb9f5"/><text x="206.5" y="571" font-family="Liberation Sans" font-weight="700" font-size="13" fill="#4f4960">C++</text><path fill="#adb3bb" d="M207,591 L215,583 V591 Z M217,583 H227 V597 H207 V592.2 H217 Z"/><rect x="203" y="599" width="30" height="14" fill="#ebc87f"/><text x="206.5" y="611" font-family="Liberation Sans" font-weight="700" font-size="13" fill="#4f4960">H</text><path fill="#adb3bb" d="M207,631 L215,623 V631 Z M217,623 H227 V637 H207 V632.2 H217 Z"/><rect x="203" y="639" width="30" height="14" fill="#cdb9f5"/><text x="206.5" y="651" font-family="Liberation Sans" font-weight="700" font-size="13" fill="#4f4960">C++</text><path fill="none" stroke="#7a7a7a" stroke-width="2.6" d="M136,668.3 L144.2,676.5 L136,684.7"/><path fill="#abb1b9" d="M167,665.2 H177.5 L181.5,669.5 H195 V686.7 H167 Z"/><circle cx="177.5" cy="678.5" r="5.5" fill="#ffffff"/><circle cx="177.5" cy="678.5" r="4" fill="#4fa7e3"/><path fill="#adb3bb" d="M171,711 L179,703 V711 Z M181,703 H191 V717 H171 V712.2 H181 Z"/><rect x="167" y="719" width="30" height="14" fill="#cdb9f5"/><text x="170.5" y="731" font-family="Liberation Sans" font-weight="700" font-size="13" fill="#4f4960">C</text><path fill="none" stroke="#7a7a7a" stroke-width="2.6" d="M99.5,748.3 L107.7,756.5 L99.5,764.7"/><path fill="#abb1b9" d="M131,745.2 H141.5 L145.5,749.5 H159 V766.7 H131 Z"/><rect x="148" y="754.5" width="14" height="16" fill="#ffffff"/><rect x="150" y="756.5" width="11" height="1.9" fill="#d49b2f"/><rect x="150" y="759.7" width="11" height="1.9" fill="#d49b2f"/><rect x="150" y="762.9" width="11" height="1.9" fill="#d49b2f"/><rect x="150" y="766.1" width="11" height="1.9" fill="#d49b2f"/><rect x="150" y="769.3" width="11" height="1.9" fill="#d49b2f"/><path fill="none" stroke="#7a7a7a" stroke-width="2.6" d="M99.5,788.3 L107.7,796.5 L99.5,804.7"/><path fill="#abb1b9" d="M131,785.2 H141.5 L145.5,789.5 H159 V806.7 H131 Z"/><rect x="148" y="794.5" width="14" height="16" fill="#ffffff"/><rect x="150" y="796.5" width="11" height="1.9" fill="#d49b2f"/><rect x="150" y="799.7" width="11" height="1.9" fill="#d49b2f"/><rect x="150" y="802.9" width="11" height="1.9" fill="#d49b2f"/><rect x="150" y="806.1" width="11" height="1.9" fill="#d49b2f"/><rect x="150" y="809.3" width="11" height="1.9" fill="#d49b2f"/><path fill="#abb1b9" d="M131,825.2 H141.5 L145.5,829.5 H159 V846.7 H131 Z"/><rect x="148" y="834.5" width="14" height="16" fill="#ffffff"/><rect x="150" y="836.5" width="11" height="1.9" fill="#d49b2f"/><rect x="150" y="839.7" width="11" height="1.9" fill="#d49b2f"/><rect x="150" y="842.9" width="11" height="1.9" fill="#d49b2f"/><rect x="150" y="846.1" width="11" height="1.9" fill="#d49b2f"/><rect x="150" y="849.3" width="11" height="1.9" fill="#d49b2f"/><path fill="none" stroke="#7a7a7a" stroke-width="2.6" d="M64,868.3 L72.2,876.5 L64,884.7"/><g transform="translate(94,866) scale(1.000,1.000)"><path fill="#6e6e6e" d="M0.7,21.7 C0.3,15 2,9.5 4.8,7.5 C6,5.2 9,3.7 12.9,3.7 C17,3.7 20,5.5 22.5,7 C24,7.8 26.5,7.5 27,5 C27.3,3 26,1.6 24.5,1.6 C23.5,1.6 22.6,2 22,2.3 L21.6,1.2 C22.8,0.3 24,0 25.2,0 C28,0 30,2.2 30,5.1 C30,8 28.5,10.5 25.5,12.7 C23,14.5 21.8,17 21.5,21.7 L18.5,21.7 C18,19.5 17,18.2 15.5,18.2 C14,18.2 12.9,19.5 12.5,21.7 L9.2,21.7 C8.8,19.5 7.8,18.3 6.5,18.3 C5.2,18.3 4.2,19.5 3.7,21.7 Z"/><path fill="none" stroke="#ffffff" stroke-width="1.1" d="M4.9,6.9 L8.3,12.2 L13.9,9.2"/><circle cx="20.1" cy="9" r="1.1" fill="#ffffff"/></g><path fill="#6e6e6e" d="M12.6,263 H22 L24,266.5 H35 V281 H12.6 Z"/><path fill="#6e6e6e" d="M25,433.5 H33 V441.5 H25 Z M15,443.5 H23 V451.2 H15 Z M25,443.5 H33 V451.2 H25 Z"/><path fill="#6e6e6e" d="M19.5,703.6 L26,713 H13 Z M13,715 H23 V724.8 H13 Z"/><circle cx="30.2" cy="719.8" r="5.2" fill="#6e6e6e"/><path fill="#6e6e6e" d="M15,1559 H33 V1581 L24,1573 L15,1581 Z"/><path fill="#6e6e6e" d="M13,1795.6 A11.0,12.240000000000009 0 0 1 35,1795.6 Z"/><path stroke="#6e6e6e" stroke-width="1.98" d="M16.96,1778.6 L20.04,1785.36 M31.04,1778.6 L27.96,1785.36"/><circle cx="19.6" cy="1790.84" r="1.21" fill="#f2f2f2"/><circle cx="28.4" cy="1790.84" r="1.21" fill="#f2f2f2"/><g transform="translate(2834.5,183) scale(0.883,0.955)"><path fill="#6e6e6e" d="M0.7,21.7 C0.3,15 2,9.5 4.8,7.5 C6,5.2 9,3.7 12.9,3.7 C17,3.7 20,5.5 22.5,7 C24,7.8 26.5,7.5 27,5 C27.3,3 26,1.6 24.5,1.6 C23.5,1.6 22.6,2 22,2.3 L21.6,1.2 C22.8,0.3 24,0 25.2,0 C28,0 30,2.2 30,5.1 C30,8 28.5,10.5 25.5,12.7 C23,14.5 21.8,17 21.5,21.7 L18.5,21.7 C18,19.5 17,18.2 15.5,18.2 C14,18.2 12.9,19.5 12.5,21.7 L9.2,21.7 C8.8,19.5 7.8,18.3 6.5,18.3 C5.2,18.3 4.2,19.5 3.7,21.7 Z"/><path fill="none" stroke="#f2f2f2" stroke-width="1.1" d="M4.9,6.9 L8.3,12.2 L13.9,9.2"/><circle cx="20.1" cy="9" r="1.1" fill="#f2f2f2"/></g><path fill="none" stroke="#6e6e6e" stroke-width="3" d="M2855,332 V328.5 H2838.5 V348 H2844"/><rect x="2846" y="334" width="12.5" height="18" rx="2" fill="none" stroke="#6e6e6e" stroke-width="3"/><rect x="2850.5" y="347" width="3.5" height="2" fill="#6e6e6e"/><defs><linearGradient id="mk" x1="0" y1="0" x2="1" y2="1"><stop offset="0" stop-color="#cdef66"/><stop offset="0.45" stop-color="#7fd385"/><stop offset="1" stop-color="#52a9bf"/></linearGradient></defs><circle cx="2846.8" cy="1035" r="42" fill="url(#mk)"/><path fill="none" stroke="#ffffff" stroke-width="9" stroke-linecap="butt" d="M2826.5,1034 L2843.5,1050.5 L2870.5,1023"/><rect x="2840" y="1194" width="16.5" height="24" rx="2.5" fill="none" stroke="#6e6e6e" stroke-width="3"/><rect x="2845.5" y="1212" width="6" height="2.2" fill="#6e6e6e"/><path fill="none" stroke="#6e6e6e" stroke-width="2.8" d="M2852,1476 V1474.5 H2840.8 V1496 H2846"/><rect x="2848.5" y="1482" width="10" height="14" fill="none" stroke="#6e6e6e" stroke-width="2.6"/><rect x="2847" y="1497" width="13" height="2" fill="#6e6e6e"/><path fill="#6e6e6e" d="M2837,1661 C2840,1658 2840,1654 2840.5,1650 C2841,1644 2845,1641 2849,1641 C2853,1641 2857,1644 2857.5,1650 C2858,1654 2858,1658 2861,1661 Z"/><path fill="#6e6e6e" d="M2845.5,1662 H2852.5 A3.5,3.5 0 0 1 2845.5,1662 Z"/><circle cx="2856" cy="1645.6" r="6" fill="#f2f2f2"/><circle cx="2856" cy="1645.6" r="4.6" fill="#4a90d9"/><path fill="#ffffff" stroke="#c9c9c9" stroke-width="2" d="M1287,232 H1303 V249 L1295,255 L1287,249 Z"/><path stroke="#c9c9c9" stroke-width="2" d="M1291,241.5 H1299"/><polyline fill="none" stroke="#a9d59e" stroke-width="1.3" points="1897.5,341 1901.5,345 1905.5,341 1909.5,345 1913.5,341 1917.5,345 1921.5,341 1925.5,345 1929.5,341 1933.5,345 1937.5,341 1941.5,345 1945.5,341 1949.5,345 1953.5,341 1957.5,345"/><polyline fill="none" stroke="#a9d59e" stroke-width="1.3" points="1369.0,561 1373.0,565 1377.0,561 1381.0,565 1385.0,561 1389.0,565 1393.0,561 1397.0,565 1401.0,561 1405.0,565 1409.0,561 1413.0,565 1417.0,561 1421.0,565 1425.0,561 1429.0,565"/><polyline fill="none" stroke="#a9d59e" stroke-width="1.3" points="1447.0,561 1451.0,565 1455.0,561 1459.0,565 1463.0,561 1467.0,565 1471.0,561 1475.0,565 1479.0,561 1483.0,565 1487.0,561 1491.0,565 1495.0,561 1499.0,565 1503.0,561 1507.0,565"/><path fill="#f5d23a" d="M2585,252.9 L2597,231.4 L2608.8,252.9 Z"/><rect x="2595" y="238" width="4" height="7" fill="#ffffff"/><rect x="2595" y="247" width="4" height="4" fill="#ffffff"/><path fill="#62a86a" d="M2645.8,242.7 L2650.2,238.8 L2654.5,243.7 L2665.2,233.5 L2668,237.4 L2654.5,250.4 Z"/><polyline fill="none" stroke="#62a86a" stroke-width="2" points="2645.4,256.2 2650.2,250.9 2655,256.2 2659.9,250.9 2664.2,256.2 2667.5,251.4"/><path fill="none" stroke="#6e6e6e" stroke-width="3.4" d="M2719.3,246 L2727,237.9 L2734.7,246 M2761.3,239.8 L2769,248 L2776.8,239.8"/><rect x="2771" y="273" width="16" height="64" rx="8" fill="#c2c2c2"/><rect x="2765" y="601" width="28" height="3.6" fill="#f4d247"/><rect x="2765" y="623" width="28" height="3.6" fill="#f4d247"/><rect x="2765" y="815" width="28" height="8" fill="#f4d247"/><rect x="2765" y="1101" width="28" height="3.7" fill="#f4d247"/><rect x="1307" y="1125" width="1486" height="28" fill="#f6f6f6"/><rect x="1313" y="1131" width="1090" height="16" rx="8" fill="#c2c2c2"/><path stroke="#aaaaaa" stroke-width="2" d="M229.5,1220 L244,1234.5 M244,1220 L229.5,1234.5"/><path stroke="#4d7fd1" stroke-width="5" stroke-linecap="round" d="M137.5,1249.5 H264.5"/><circle cx="2715" cy="1225" r="10.14" fill="#6e6e6e"/><rect x="2712.01" y="1212.00" width="5.98" height="13.00" rx="1" fill="#6e6e6e" transform="rotate(0.0 2715 1225)"/><rect x="2712.01" y="1212.00" width="5.98" height="13.00" rx="1" fill="#6e6e6e" transform="rotate(60.0 2715 1225)"/><rect x="2712.01" y="1212.00" width="5.98" height="13.00" rx="1" fill="#6e6e6e" transform="rotate(120.0 2715 1225)"/><rect x="2712.01" y="1212.00" width="5.98" height="13.00" rx="1" fill="#6e6e6e" transform="rotate(180.0 2715 1225)"/><rect x="2712.01" y="1212.00" width="5.98" height="13.00" rx="1" fill="#6e6e6e" transform="rotate(240.0 2715 1225)"/><rect x="2712.01" y="1212.00" width="5.98" height="13.00" rx="1" fill="#6e6e6e" transform="rotate(300.0 2715 1225)"/><circle cx="2715" cy="1225" r="5.20" fill="#e4e7ed"/><rect x="2755" y="1222.8" width="24" height="4.2" fill="#6e6e6e"/><path fill="none" stroke="#6e6e6e" stroke-width="4.2" d="M63.5,1281 A9.6,9.6 0 0 1 82.5,1280.5"/><path fill="#6e6e6e" d="M61.3,1271.5 V1281.5 H71 Z"/><path fill="none" stroke="#6e6e6e" stroke-width="4.2" d="M82.8,1285 A9.6,9.6 0 0 1 63.5,1285.5"/><path fill="#6e6e6e" d="M85.3,1284.5 V1294.8 H75.5 Z"/><rect x="63.3" y="1325" width="19.5" height="19.8" fill="#bdbdbd"/><path fill="#6e6e6e" d="M76,1373 L87,1384 L80.5,1387.5 L78.5,1395 L66,1382.5 L73.5,1380.5 Z"/><path stroke="#6e6e6e" stroke-width="3" d="M71.5,1389.5 L59,1400.5"/><path fill="#6e6e6e" d="M59.2,1438.6 C63,1431.5 68,1428.6 73.1,1428.6 C78.2,1428.6 83.2,1431.5 87,1438.6 C83.2,1445.8 78.2,1448.7 73.1,1448.7 C68,1448.7 63,1445.8 59.2,1438.6 Z"/><circle cx="73.1" cy="1438.6" r="6.3" fill="#f2f2f2"/><circle cx="73.1" cy="1438.6" r="3.6" fill="#6e6e6e"/><path fill="#3f3f3f" d="M79.3,1450.8 H90.8 L85,1457 Z"/><path fill="#8ccc7c" d="M155,1273.5 L159.2,1269 L164,1274.5 L176,1263 L180,1267.5 L164,1283 Z"/><rect x="2753" y="1271" width="24" height="3.8" fill="#6e6e6e"/><path fill="none" stroke="#6e6e6e" stroke-width="3.8" d="M2753,1283.3 H2771 A5.8,5.8 0 0 1 2771,1295 H2767"/><rect x="2753" y="1291" width="6" height="3.8" fill="#6e6e6e"/><path fill="#6e6e6e" d="M2763.6,1292.9 L2769,1287 V1299 Z"/><rect x="2753" y="1325" width="7.7" height="3.5" fill="#6e6e6e"/><rect x="2753" y="1333" width="7.7" height="3.5" fill="#6e6e6e"/><rect x="2769" y="1321" width="4" height="11" fill="#6e6e6e"/><path fill="#6e6e6e" d="M2763.6,1331 H2778.7 L2771,1338.8 Z"/><rect x="2753" y="1341" width="24" height="3.8" fill="#6e6e6e"/><circle cx="78.4" cy="1846.3" r="10.1" fill="#6e6e6e"/><rect x="76.5" y="1840.6" width="3.8" height="8.8" fill="#f2f2f2"/><rect x="76.5" y="1850.7" width="3.8" height="2.4" fill="#f2f2f2"/><path fill="none" stroke="#6e6e6e" stroke-width="3" d="M249,1840 V1856.5 M258.6,1842 C258.6,1849 249,1847 249,1852"/><circle cx="249" cy="1839.8" r="3" fill="#6e6e6e"/><circle cx="249" cy="1856.5" r="3" fill="#6e6e6e"/><circle cx="258.6" cy="1841.9" r="3" fill="#6e6e6e"/><rect x="477.2" y="1837.1" width="21.6" height="19.9" fill="#6e6e6e"/><path fill="none" stroke="#f2f2f2" stroke-width="2" d="M481,1841 L486,1845.5 L481,1850"/><rect x="487" y="1851.5" width="8" height="2" fill="#f2f2f2"/><rect x="636.9" y="1841.3" width="21.9" height="3.5" fill="#6e6e6e"/><rect x="636.9" y="1847.2" width="11.5" height="3.6" fill="#6e6e6e"/><rect x="636.9" y="1853" width="17.9" height="4" fill="#6e6e6e"/><path fill="#6e6e6e" d="M791.5,1840 C791.5,1837.5 793,1837 798,1837 C803,1837 804.5,1837.5 804.5,1840 V1843 H808.9 V1845 H804.5 V1849 C804.5,1851 803,1852 802,1852.5 C806,1854 807.5,1857 807.5,1860.7 H788.5 C788.5,1857 790,1854 794,1852.5 C793,1852 791.5,1851 791.5,1849 V1845 H787 V1843 H791.5 Z"/><path fill="#6e6e6e" d="M1013,1842.5 L1019.6,1836 H1024 L1021.5,1838.6 L1038.7,1855.8 L1035.3,1859.3 L1018.2,1842.2 L1016.3,1845.8 Z"/><path fill="#6e6e6e" d="M1138.8,1839 H1142.3 V1842.5 H1138.8 Z M1145.5,1839 H1158.9 V1842.5 H1145.5 Z M1138.8,1845.5 H1142.3 V1849 H1138.8 Z M1145.5,1845.5 H1158.9 V1849 H1145.5 Z M1138.8,1852 H1142.3 V1855.4 H1138.8 Z M1145.5,1852 H1158.9 V1855.4 H1145.5 Z"/><path fill="none" stroke="#6e6e6e" stroke-width="5" d="M1273.5,1857 A10.5,10.5 0 0 1 1294.5,1857"/><path fill="#6e6e6e" d="M1281.5,1855.5 L1290.5,1846 L1286.5,1858 Z"/><path fill="none" stroke="#6e6e6e" stroke-width="2" stroke-linejoin="round" d="M1429,1836.5 H1443 L1448,1843.5 L1436,1859.5 L1424,1843.5 Z M1424,1843.5 H1448 M1432,1843.5 L1436,1859.5 L1440,1843.5 M1429,1836.5 L1432,1843.5 L1436,1837 L1440,1843.5 L1443,1836.5"/><path fill="none" stroke="#6e6e6e" stroke-width="2.4" d="M2634.2,1849 V1836.2 H2653 M2638.5,1854 V1841 H2656 V1845"/><path fill="none" stroke="#6e6e6e" stroke-width="2.4" d="M2643,1854 H2640"/><circle cx="2648.5" cy="1850" r="4.6" fill="none" stroke="#6e6e6e" stroke-width="2.6"/><path stroke="#6e6e6e" stroke-width="3" d="M2651.5,1853 L2657.5,1858.5"/><path fill="none" stroke="#6e6e6e" stroke-width="1.9" d="M16.1,1881 V1900 H35"/><rect x="20.1" y="1877.9" width="18" height="18" fill="none" stroke="#6e6e6e" stroke-width="1.9"/><path fill="none" stroke="#6e6e6e" stroke-width="3.3" d="M2806.7,1887 V1883.5 A5.2,5.2 0 0 1 2817,1883.5 V1887.5"/><rect x="2811" y="1887" width="16" height="11.8" fill="#6e6e6e"/><path fill="#6e6e6e" d="M2859,1877 H2875 A4,4 0 0 1 2879,1881 V1898.8 L2874,1894.5 H2859 A4,4 0 0 1 2855,1890.5 V1881 A4,4 0 0 1 2859,1877 Z"/><rect x="2865" y="1879.5" width="4" height="7.8" fill="#f2f2f2"/><rect x="2865" y="1889" width="4" height="4" fill="#f2f2f2"/>
</svg>
</div></div>
<div id="frame"></div>
</body></html>
